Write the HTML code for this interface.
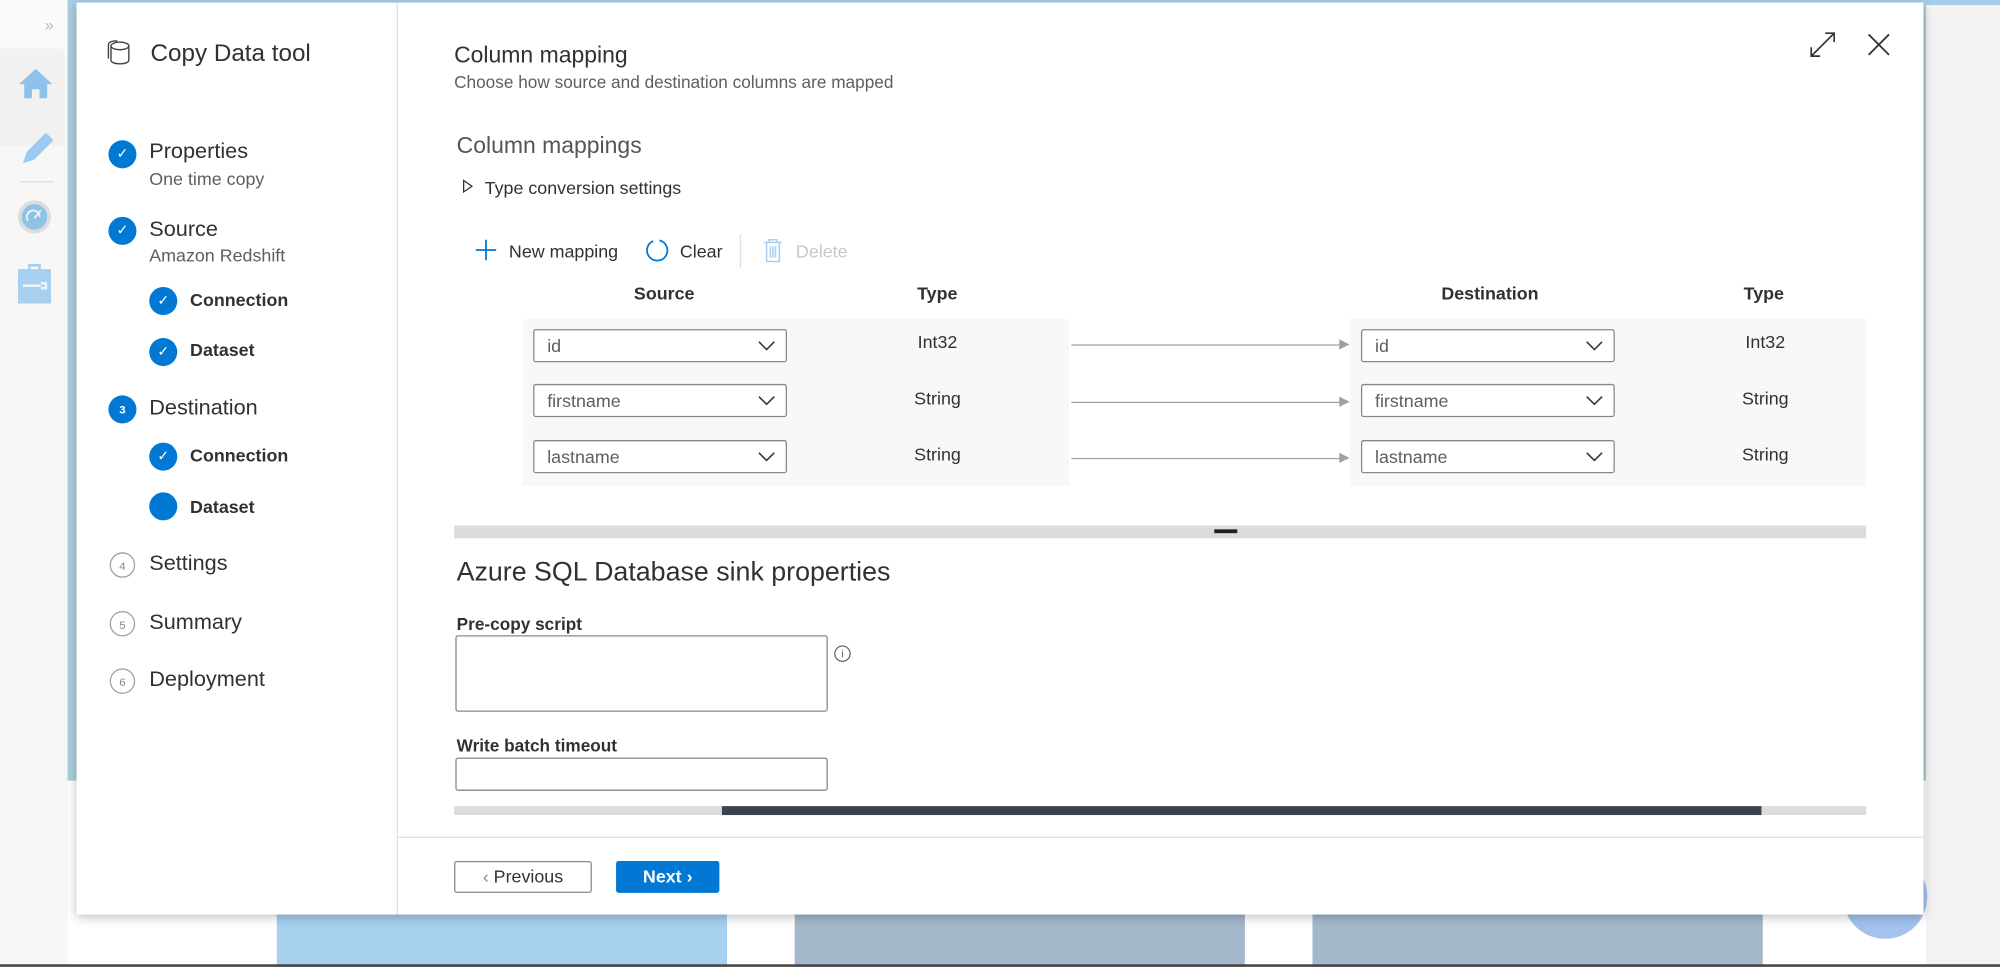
<!DOCTYPE html>
<html><head><meta charset="utf-8"><style>
*{margin:0;padding:0;box-sizing:border-box}
html,body{width:2000px;height:967px;overflow:hidden;background:#fff;font-family:"Liberation Sans",sans-serif}
#w{position:absolute;left:0;top:0;width:1568px;height:758px;transform:scale(1.27551);transform-origin:0 0;color:#323130}
.a{position:absolute}
.circ{position:absolute;width:22px;height:22px;border-radius:50%;background:#0078d4;color:#fff;font-size:11px;text-align:center;line-height:22px}
.oc{background:#fff;border:1px solid #a19f9d;color:#888;font-size:9px;line-height:20px;width:20px;height:20px}
.st{position:absolute;font-size:17px;color:#323130}
.ss{position:absolute;font-size:14px;color:#605e5c}
.sub{position:absolute;font-size:14px;color:#323130;font-weight:bold}
.dd{position:absolute;width:199px;height:26px;border:1px solid #8a8886;background:#fff;border-radius:2px;font-size:14px;color:#605e5c;padding:4px 10px}
.dd svg{position:absolute;right:8px;top:8px}
.ty{position:absolute;font-size:14px;color:#323130;width:60px;text-align:center}
.ar{position:absolute;height:1px;background:#a0a0a0;width:217px;left:840px}
.ar:after{content:"";position:absolute;right:-1px;top:-4px;border-left:8px solid #a0a0a0;border-top:4px solid transparent;border-bottom:4px solid transparent}
.hd{position:absolute;font-size:14px;font-weight:bold;color:#323130}
</style></head><body><div id="w">
<div class="a" style="left:0;top:0;width:53px;height:758px;background:#f7f7f7"></div>
<div class="a" style="left:0;top:0;width:53px;height:40px;background:#fafafa"></div>
<div class="a" style="left:0;top:38px;width:50px;height:76px;background:#f1f1f1"></div>
<div class="a" style="left:35px;top:12px;font-size:13px;color:#bbb">»</div>
<svg class="a" style="left:14px;top:52px" width="28" height="26"><path d="M14 2L1 14h4v11h6v-7h6v7h6V14h4z" fill="#8ec1ec"/></svg>
<svg class="a" style="left:14px;top:102px" width="28" height="30"><path d="M4 26l3-9 15-15 6 6-15 15z" fill="#9ccaf0"/></svg>
<div class="a" style="left:16px;top:142px;width:26px;height:1px;background:#ddd"></div>
<svg class="a" style="left:13px;top:156px" width="28" height="28"><circle cx="14" cy="14" r="13" fill="#ddd"/><circle cx="14" cy="14" r="10" fill="#8fc3e6"/><path d="M9 17a5 5 0 1 1 9-3M14 15l5-6" stroke="#e8f3fb" stroke-width="1.5" fill="none"/></svg>
<svg class="a" style="left:14px;top:206px" width="26" height="32"><path d="M9 5V2h8v3" stroke="#a6cff0" stroke-width="2" fill="none"/><rect x="0" y="5" width="26" height="27" fill="#a6cff0"/><path d="M4 18h14M18 16h4v4h-4" stroke="#eaf4fc" stroke-width="2" fill="none"/></svg>
<div class="a" style="left:53px;top:0;width:1457px;height:612px;background:#a9d0dc"></div>
<div class="a" style="left:53px;top:0;width:1515px;height:4px;background:#a6cdeb"></div>
<div class="a" style="left:1510px;top:4px;width:58px;height:754px;background:#f3f3f3"></div>
<div class="a" style="left:217px;top:690px;width:353px;height:68px;background:#a6d0ee"></div>
<div class="a" style="left:623px;top:690px;width:353px;height:68px;background:#a4b8cc"></div>
<div class="a" style="left:1029px;top:690px;width:353px;height:68px;background:#a4b8cc"></div>
<div class="a" style="left:1445px;top:670px;width:66px;height:66px;border-radius:50%;background:#a3c3ee"></div>
<div class="a" style="left:0;top:756px;width:1568px;height:2px;background:#444"></div>
<div class="a" style="left:60px;top:2px;width:1448px;height:715px;background:#fff;box-shadow:0 2px 8px rgba(0,0,0,.25)"></div>
<div class="a" style="left:311px;top:2px;width:1px;height:715px;background:#e1e1e1"></div>
<svg class="a" style="left:82px;top:30px" width="22" height="22" fill="none" stroke="#444" stroke-width="1.1"><ellipse cx="12" cy="6" rx="7" ry="3"/><path d="M5 6v11c0 2 3 3 7 3s7-1 7-3V6"/><path d="M3 16V5c0-2 3-3 7-3"/></svg>
<div class="a" style="left:118px;top:32px;font-size:19px;color:#323130">Copy Data tool</div>
<div class="circ" style="left:85px;top:110px">✓</div><div class="st" style="left:117px;top:109px">Properties</div><div class="ss" style="left:117px;top:132px">One time copy</div>
<div class="circ" style="left:85px;top:170px">✓</div><div class="st" style="left:117px;top:170px">Source</div><div class="ss" style="left:117px;top:192px">Amazon Redshift</div>
<div class="circ" style="left:117px;top:225px">✓</div><div class="sub" style="left:149px;top:227px">Connection</div>
<div class="circ" style="left:117px;top:265px">✓</div><div class="sub" style="left:149px;top:266px">Dataset</div>
<div class="circ" style="left:85px;top:310px;font-size:9px;font-weight:bold">3</div><div class="st" style="left:117px;top:310px">Destination</div>
<div class="circ" style="left:117px;top:347px">✓</div><div class="sub" style="left:149px;top:349px">Connection</div>
<div class="circ" style="left:117px;top:386px"></div><div class="sub" style="left:149px;top:389px">Dataset</div>
<div class="circ oc" style="left:86px;top:433px">4</div><div class="st" style="left:117px;top:432px">Settings</div>
<div class="circ oc" style="left:86px;top:479px">5</div><div class="st" style="left:117px;top:478px">Summary</div>
<div class="circ oc" style="left:86px;top:524px">6</div><div class="st" style="left:117px;top:523px">Deployment</div>
<div class="a" style="left:356px;top:33px;font-size:18px;color:#323130">Column mapping</div>
<div class="a" style="left:356px;top:57px;font-size:13.5px;color:#605e5c">Choose how source and destination columns are mapped</div>
<svg class="a" style="left:1418px;top:24px" width="22" height="22" stroke="#333" stroke-width="1.3" fill="none"><path d="M2 20L20 2M13 2h7v7M2 13v7h7"/></svg>
<svg class="a" style="left:1463px;top:25px" width="20" height="20" stroke="#333" stroke-width="1.4"><path d="M2 2L18 18M18 2L2 18"/></svg>
<div class="a" style="left:358px;top:104px;font-size:18px;color:#555">Column mappings</div>
<svg class="a" style="left:362px;top:140px" width="10" height="12" fill="none" stroke="#333"><path d="M1.5 1.5L8 6 1.5 10.5z"/></svg>
<div class="a" style="left:380px;top:139px;font-size:14px;color:#323130">Type conversion settings</div>
<svg class="a" style="left:372px;top:187px" width="18" height="18" stroke="#0078d4" stroke-width="1.4"><path d="M9 1v16M1 9h16"/></svg>
<div class="a" style="left:399px;top:189px;font-size:14px">New mapping</div>
<svg class="a" style="left:505px;top:186px" width="20" height="20" fill="none" stroke="#0078d4" stroke-width="1.4"><path d="M7 3A8 8 0 1 0 12 2.5"/></svg>
<div class="a" style="left:533px;top:189px;font-size:14px">Clear</div>
<div class="a" style="left:580px;top:184px;width:1px;height:26px;background:#ddd"></div>
<svg class="a" style="left:598px;top:186px" width="16" height="20" fill="none" stroke="#a9cff0" stroke-width="1.2"><path d="M1 4h14M5 4V2h6v2M3 4v15h10V4M6 7v9M8 7v9M10 7v9"/></svg>
<div class="a" style="left:624px;top:189px;font-size:14px;color:#c8c8c8">Delete</div>
<div class="hd" style="left:497px;top:222px">Source</div>
<div class="hd" style="left:719px;top:222px">Type</div>
<div class="hd" style="left:1130px;top:222px">Destination</div>
<div class="hd" style="left:1367px;top:222px">Type</div>
<div class="a" style="left:410px;top:250px;width:428px;height:131px;background:#f8f8f8"></div>
<div class="a" style="left:1058px;top:250px;width:405px;height:131px;background:#f8f8f8"></div>
<div class="dd" style="left:418px;top:258px">id<svg width="14" height="8" fill="none" stroke="#333" stroke-width="1.2"><path d="M1 1l6 6 6-6"/></svg></div>
<div class="dd" style="left:418px;top:301px">firstname<svg width="14" height="8" fill="none" stroke="#333" stroke-width="1.2"><path d="M1 1l6 6 6-6"/></svg></div>
<div class="dd" style="left:418px;top:345px">lastname<svg width="14" height="8" fill="none" stroke="#333" stroke-width="1.2"><path d="M1 1l6 6 6-6"/></svg></div>
<div class="dd" style="left:1067px;top:258px">id<svg width="14" height="8" fill="none" stroke="#333" stroke-width="1.2"><path d="M1 1l6 6 6-6"/></svg></div>
<div class="dd" style="left:1067px;top:301px">firstname<svg width="14" height="8" fill="none" stroke="#333" stroke-width="1.2"><path d="M1 1l6 6 6-6"/></svg></div>
<div class="dd" style="left:1067px;top:345px">lastname<svg width="14" height="8" fill="none" stroke="#333" stroke-width="1.2"><path d="M1 1l6 6 6-6"/></svg></div>
<div class="ty" style="left:705px;top:260px">Int32</div><div class="ty" style="left:705px;top:304px">String</div><div class="ty" style="left:705px;top:348px">String</div>
<div class="ty" style="left:1354px;top:260px">Int32</div><div class="ty" style="left:1354px;top:304px">String</div><div class="ty" style="left:1354px;top:348px">String</div>
<div class="ar" style="top:270px"></div><div class="ar" style="top:315px"></div><div class="ar" style="top:359px"></div>
<div class="a" style="left:356px;top:412px;width:1107px;height:10px;background:#dcdcdc"></div>
<div class="a" style="left:952px;top:415px;width:18px;height:3px;background:#222"></div>
<div class="a" style="left:358px;top:437px;font-size:21px;color:#323130">Azure SQL Database sink properties</div>
<div class="a" style="left:358px;top:482px;font-size:13.5px;font-weight:bold">Pre-copy script</div>
<div class="a" style="left:357px;top:498px;width:292px;height:60px;border:1px solid #8a8886;border-radius:2px"></div>
<div class="a" style="left:654px;top:506px;width:13px;height:13px;border:1px solid #666;border-radius:50%;font-size:8px;text-align:center;line-height:11px;color:#555">i</div>
<div class="a" style="left:358px;top:577px;font-size:13.5px;font-weight:bold">Write batch timeout</div>
<div class="a" style="left:357px;top:594px;width:292px;height:26px;border:1px solid #8a8886;border-radius:2px"></div>
<div class="a" style="left:356px;top:632px;width:1107px;height:7px;background:#dcdcdc"></div>
<div class="a" style="left:566px;top:632px;width:815px;height:7px;background:#3b4350"></div>
<div class="a" style="left:312px;top:656px;width:1196px;height:1px;background:#e1e1e1"></div>
<div class="a" style="left:356px;top:675px;width:108px;height:25px;border:1px solid #8a8886;border-radius:2px;font-size:14px;text-align:center;line-height:23px"><span style="color:#888">‹</span> Previous</div>
<div class="a" style="left:483px;top:675px;width:81px;height:25px;background:#0078d4;border-radius:2px;font-size:14px;font-weight:bold;color:#fff;text-align:center;line-height:25px">Next ›</div>
</div></body></html>
